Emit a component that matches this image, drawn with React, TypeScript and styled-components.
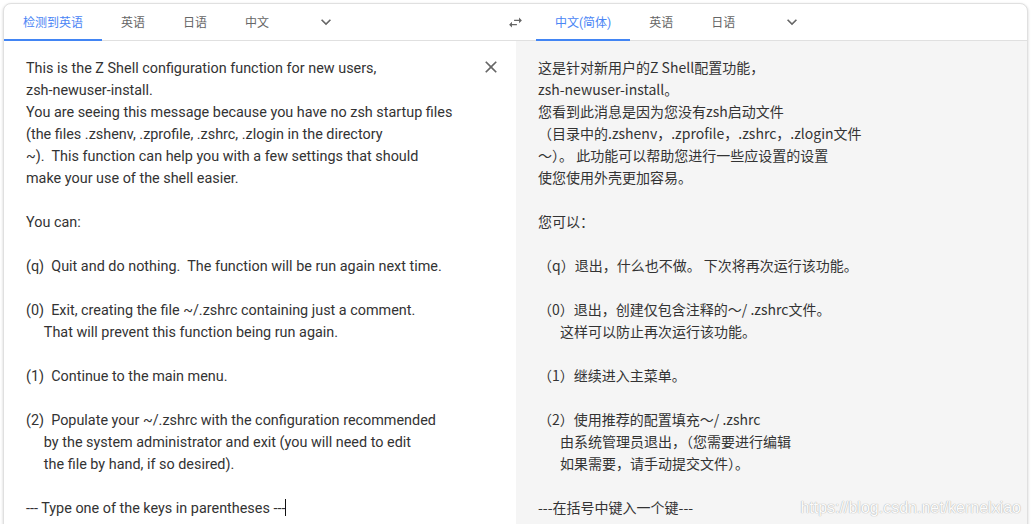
import styled, { createGlobalStyle } from "styled-components";

const GlobalStyle = createGlobalStyle`
  html, body {
    margin: 0;
    padding: 0;
    background: #fff;
    overflow: hidden;
  }
  body {
    font-family: Roboto, "Noto Sans CJK SC", sans-serif;
  }
`;

const Page = styled.div`
  padding: 3px 5px 0 3px;
  height: 524px;
  box-sizing: border-box;
`;

const Card = styled.div`
  position: relative;
  height: 524px;
  box-sizing: border-box;
  border: 1px solid #e0e0e0;
  border-radius: 8px 8px 0 0;
  box-shadow: 0 1px 3px rgba(0, 0, 0, 0.18);
  background: #fff;
  overflow: hidden;
  display: flex;
  flex-direction: column;
`;

const Header = styled.div`
  display: flex;
  align-items: stretch;
  height: 36px;
  flex-shrink: 0;
  border-bottom: 1px solid #e0e0e0;
`;

const TabGroup = styled.div<{ $width?: number }>`
  display: flex;
  align-items: stretch;
  width: ${(p) => (p.$width ? `${p.$width}px` : "auto")};
`;

const Tab = styled.div<{ $active?: boolean }>`
  position: relative;
  display: flex;
  align-items: center;
  padding: 0 19px;
  font-size: 12px;
  font-family: Roboto, "Noto Sans CJK SC", sans-serif;
  color: ${(p) => (p.$active ? "#4a85f5" : "#666")};
  border-bottom: 2px solid ${(p) => (p.$active ? "#4285f4" : "transparent")};
  margin-bottom: -1px;
`;

const MoreTab = styled.div`
  display: flex;
  align-items: center;
  justify-content: center;
  width: 76px;
  color: #666;
`;

const SwapButton = styled.div`
  display: flex;
  align-items: center;
  justify-content: center;
  width: 36px;
  padding-right: 6px;
  box-sizing: border-box;
  color: #666;
`;

const Panes = styled.div`
  display: grid;
  grid-template-columns: 512px 1fr;
  flex: 1;
`;

const Pane = styled.div<{ $alt?: boolean }>`
  position: relative;
  background: ${(p) => (p.$alt ? "#f5f5f5" : "#fff")};
  padding: ${(p) => (p.$alt ? "15px 22px" : "17px 22px")};
  font-size: ${(p) => (p.$alt ? "14px" : "14.4px")};
  line-height: 22px;
  color: #333;
  white-space: pre-wrap;
  font-family: ${(p) =>
    p.$alt
      ? `"Noto Sans CJK SC", Roboto, sans-serif`
      : `Roboto, "Noto Sans CJK SC", sans-serif`};
`;

const Line = styled.div`
  min-height: 22px;
`;

const CloseButton = styled.div`
  position: absolute;
  top: 15px;
  right: 14px;
  width: 22px;
  height: 22px;
  display: flex;
  align-items: center;
  justify-content: center;
  color: #666;
`;

const Caret = styled.span`
  display: inline-block;
  width: 1px;
  height: 17px;
  background: #111;
  vertical-align: -3px;
`;

const Watermark = styled.div`
  position: absolute;
  right: 6px;
  bottom: 9px;
  font-family: "Liberation Sans", Arial, sans-serif;
  font-size: 16px;
  color: #fcfcfc;
  text-shadow: 0 0 1px #a8a8a8, 0 0 1px #c0c0c0;
  white-space: nowrap;
`;

const Chevron = () => (
  <svg width="20" height="20" viewBox="0 0 24 24" fill="currentColor">
    <path d="M16.59 8.59L12 13.17 7.41 8.59 6 10l6 6 6-6z" />
  </svg>
);

const leftLines = [
  "This is the Z Shell configuration function for new users,",
  "zsh-newuser-install.",
  "You are seeing this message because you have no zsh startup files",
  "(the files .zshenv, .zprofile, .zshrc, .zlogin in the directory",
  "~).  This function can help you with a few settings that should",
  "make your use of the shell easier.",
  "",
  "You can:",
  "",
  "(q)  Quit and do nothing.  The function will be run again next time.",
  "",
  "(0)  Exit, creating the file ~/.zshrc containing just a comment.",
  "     That will prevent this function being run again.",
  "",
  "(1)  Continue to the main menu.",
  "",
  "(2)  Populate your ~/.zshrc with the configuration recommended",
  "     by the system administrator and exit (you will need to edit",
  "     the file by hand, if so desired).",
  "",
];

const rightLines = [
  "这是针对新用户的Z Shell配置功能，",
  "zsh-newuser-install。",
  "您看到此消息是因为您没有zsh启动文件",
  "（目录中的.zshenv，.zprofile，.zshrc，.zlogin文件",
  "〜）。 此功能可以帮助您进行一些应设置的设置",
  "使您使用外壳更加容易。",
  "",
  "您可以：",
  "",
  "（q）退出，什么也不做。 下次将再次运行该功能。",
  "",
  "（0）退出，创建仅包含注释的〜/ .zshrc文件。",
  "       这样可以防止再次运行该功能。",
  "",
  "（1）继续进入主菜单。",
  "",
  "（2）使用推荐的配置填充〜/ .zshrc",
  "       由系统管理员退出，（您需要进行编辑",
  "       如果需要，请手动提交文件）。",
  "",
  "---在括号中键入一个键---",
];

export default function App() {
  return (
    <>
      <GlobalStyle />
      <Page>
        <Card>
          <Header>
            <TabGroup $width={496}>
              <Tab $active>检测到英语</Tab>
              <Tab>英语</Tab>
              <Tab>日语</Tab>
              <Tab>中文</Tab>
              <MoreTab>
                <Chevron />
              </MoreTab>
            </TabGroup>
            <SwapButton>
              <svg width="17" height="17" viewBox="0 0 24 24" fill="currentColor">
                <path d="M6.99 11L3 15l3.99 4v-3H14v-2H6.99v-3zM21 9l-3.99-4v3H10v2h7.01v3L21 9z" />
              </svg>
            </SwapButton>
            <TabGroup>
              <Tab $active>中文(简体)</Tab>
              <Tab>英语</Tab>
              <Tab>日语</Tab>
              <MoreTab>
                <Chevron />
              </MoreTab>
            </TabGroup>
          </Header>
          <Panes>
            <Pane>
              {leftLines.map((l, i) => (
                <Line key={i}>{l}</Line>
              ))}
              <Line>
                --- Type one of the keys in parentheses ---
                <Caret />
              </Line>
              <CloseButton>
                <svg width="20" height="20" viewBox="0 0 24 24" fill="currentColor">
                  <path d="M19 6.41L17.59 5 12 10.59 6.41 5 5 6.41 10.59 12 5 17.59 6.41 19 12 13.41 17.59 19 19 17.59 13.41 12z" />
                </svg>
              </CloseButton>
            </Pane>
            <Pane $alt>
              {rightLines.map((l, i) => (
                <Line key={i}>{l}</Line>
              ))}
            </Pane>
          </Panes>
          <Watermark>https://blog.csdn.net/kernelxiao</Watermark>
        </Card>
      </Page>
    </>
  );
}
